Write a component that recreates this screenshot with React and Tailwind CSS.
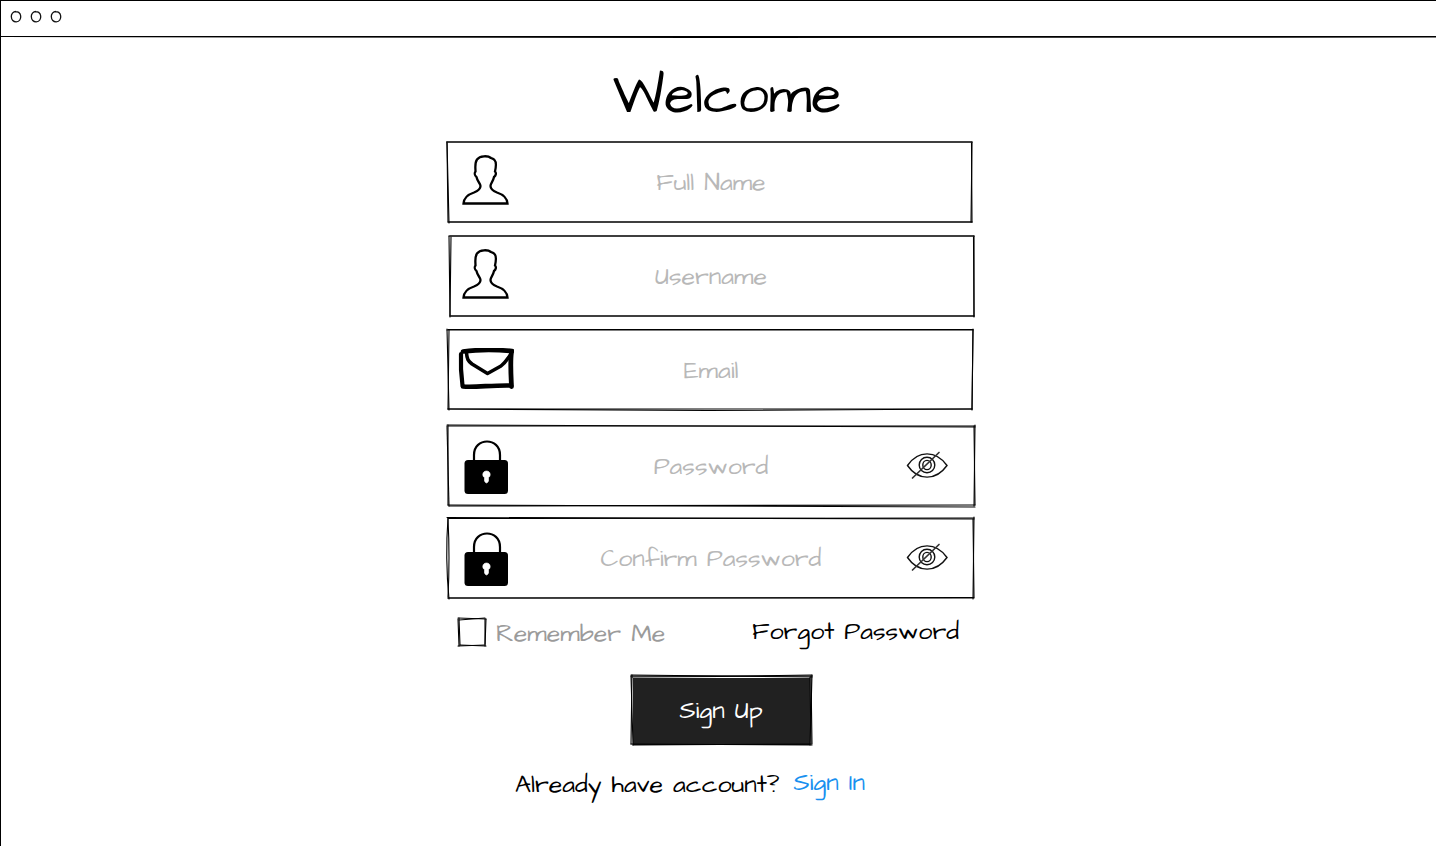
import { useState } from "react";

const outlines = {
  name: ["M-1.500 0 L524 0", "M-1 0 L524 0", "M524 0 L523 80", "M523.500 1 L524 80", "M1 80 L524 80", "M0 80 L524 80", "M-1 0 L1 81", "M-1 1 L0 80"],
  username: ["M1 0 L526 0", "M2 0 L526 0", "M526 0 L526 80", "M525.500 1 L526 81", "M2 80 L526 80", "M3 80 L526 80", "M1 0 L2 80", "M3 1 L2 81"],
  email: ["M-1 0 L525 0", "M0 -0.500 L525 -0.500", "M525 -1 L524 80", "M525 0 L524 79", "M0 79 L524 79", "M0 79 L260 80.500 L524 79", "M-1 -1 L1 80", "M1 0 L0 79"],
  password: ["M-1 -1 L527 1", "M0 0 L527 0", "M527 -1 L526 80", "M526 0 L527 79", "M0 79 L527 81", "M1 80 L527 79", "M-1 0 L1 80", "M0 -1 L0 79"],
  confirm: ["M-1 -0.500 L526 1", "M0 0.500 L526 0", "M526 -1 L525 81", "M525 1 L526 79", "M0 80 L526 79.500", "M0 80 L526 80", "M0 0 Q-3 40 1 81", "M0 1 Q2 40 0 79"],
};

function Outline({ paths, box = "0 0 526 80" }) {
  return (
    <svg
      aria-hidden="true"
      viewBox={box}
      preserveAspectRatio="none"
      className="pointer-events-none absolute inset-0 h-full w-full overflow-visible"
      fill="none"
      stroke="#000"
      strokeWidth="1.1"
      strokeLinecap="round"
    >
      {paths.map((d) => (
        <path key={d} d={d} vectorEffect="non-scaling-stroke" />
      ))}
    </svg>
  );
}

function UserIcon() {
  return (
    <svg aria-hidden="true" className="mb-1" width="48" height="50" viewBox="0 0 48 50" fill="none" stroke="#000" strokeWidth="2.3" strokeLinejoin="miter">
      <path d="M1.500 48.500 H45.500 C45 42 41 39.500 35 37.500 C30 35.500 28.500 34 28.500 31 C28.500 28.500 31 27 32 22 C34 20.500 34.500 18 33 16.500 C34 12 34.500 7 32.500 5 C31 3 30 3.500 29 3 C26 0.500 18 0.500 15 4.500 C12.500 8 13.500 13 13.500 16.500 C12.200 18 12.800 20.500 14.500 22 C15.500 27 18.500 28.500 18.500 31 C18.500 34 17 35.500 12 37.500 C6 39.500 2 42 1.500 48.500 Z" />
    </svg>
  );
}

function MailIcon() {
  return (
    <svg aria-hidden="true" className="mb-0.5" width="56" height="42" viewBox="0 0 56 42" fill="none" stroke="#000" strokeLinecap="round" strokeLinejoin="round">
      <path d="M5 3.500 C20 1.500 38 1.500 54 3" strokeWidth="4.600" />
      <path d="M3 6 C2.500 17 3.500 30 4.500 37.500" strokeWidth="4.200" />
      <path d="M5 38.500 C18 39.500 34 37 53 37.500" strokeWidth="4.600" />
      <path d="M53.500 4 C52 14 53 28 53.500 38.500" strokeWidth="4.800" />
      <path d="M8.500 5 C9 11 10 13 14 16 L29.500 25.500 L43 18 C48 14 50 10 53 6" strokeWidth="3.500" />
    </svg>
  );
}

function LockIcon() {
  return (
    <svg aria-hidden="true" className="mt-0.5" width="44" height="54" viewBox="0 0 44 54">
      <path d="M10 21 V15 C10 -3 36 -3 36 15 V21" fill="none" stroke="#000" strokeWidth="2.200" />
      <rect x="0.500" y="20" width="43.500" height="34" rx="3.500" fill="#000" />
      <path d="M22.500 31 C18 31 18 36.500 20.500 37.500 V41 Q22.500 45 24.500 41 V37.500 C27 36.500 27 31 22.500 31 Z" fill="#fff" stroke="#fff" strokeWidth="0.6" />
    </svg>
  );
}

function EyeIcon() {
  return (
    <svg aria-hidden="true" width="42" height="30" viewBox="0 0 42 30" fill="none" stroke="#111" strokeWidth="1.400" strokeLinecap="round">
      <path d="M1.500 14.500 C12 -1 30 -1 41 14.500 C30 30 12 30 1.500 14.500 Z" />
      <circle cx="21" cy="14" r="7.800" />
      <ellipse cx="21" cy="14" rx="4.200" ry="4.600" />
      <path d="M6.500 27 L33 1.500" stroke="#333" strokeWidth="1.700" />
    </svg>
  );
}

function Field({ id, label, type = "text", icon, secret = false }) {
  const [shown, setShown] = useState(false);
  return (
    <div className="relative grid h-20 grid-cols-[94px_1fr_94px] items-center">
      <Outline paths={outlines[id]} />
      <label htmlFor={id} aria-label={label} className="flex justify-center pr-[18px]">
        {icon}
      </label>
      <input
        id={id}
        name={id}
        type={secret && !shown ? "password" : type}
        placeholder={label}
        className="h-16 w-full min-w-0 bg-transparent text-center text-[25px] leading-8 outline-none placeholder:text-[#b8b8b8]"
      />
      {secret && (
        <button type="button" aria-label={`Show ${label}`} onClick={() => setShown(!shown)} className="flex justify-center">
          <EyeIcon />
        </button>
      )}
    </div>
  );
}

export default function App() {
  return (
    <div className="min-h-screen border-l border-black bg-white font-['Architects_Daughter','Inter',sans-serif] text-[25px] leading-8 text-black">
      <header className="relative flex h-[38px] items-center gap-2 border-t border-black px-[9px] pb-1.5">
        {[0, 1, 2].map((n) => (
          <svg key={n} aria-hidden="true" width="12" height="14" viewBox="0 0 12 14" fill="none" stroke="#111" strokeWidth="1.300">
            <path d="M6 1.500 C3 1.500 1.200 4 1.300 6.500 C1.400 10 3.500 12 6.200 11.900 C9.500 11.700 11 9 10.700 6 C10.400 3 8 0.700 3.500 2" />
          </svg>
        ))}
        <Outline box="0 0 1436 37" paths={["M0 35.500 L1436 35.500", "M0 35.500 L700 36.500 L1436 36"]} />
      </header>
      <main className="pr-[15px]">
        <form className="mx-auto w-full max-w-[526px]" onSubmit={(e) => e.preventDefault()}>
          <h1 className="pt-[26px] pb-3.5 pl-8 text-center text-[55px] leading-[64px] font-normal">Welcome</h1>
          <div className="flex flex-col gap-4">
            <div className="flex flex-col gap-3.5">
              <Field id="name" label="Full Name" icon={<UserIcon />} />
              <Field id="username" label="Username" icon={<UserIcon />} />
              <Field id="email" label="Email" type="email" icon={<MailIcon />} />
            </div>
            <div className="flex flex-col gap-3">
              <Field id="password" label="Password" secret icon={<LockIcon />} />
              <Field id="confirm" label="Confirm Password" secret icon={<LockIcon />} />
            </div>
          </div>
          <div className="flex items-start justify-between pt-5 pr-[15px] pl-2.5">
            <label className="flex items-start gap-2.5 text-[#9b9b9b]">
              <span className="relative block size-7">
                <input type="checkbox" name="remember" className="block size-7 appearance-none checked:bg-[#212121]" />
                <Outline box="0 0 28 28" paths={["M0 0 L28 1", "M1 2 L27 0", "M28 1 L27 28", "M27 1 L27 26", "M0 28 L27 27", "M2 27 L28 28", "M0 1 L1 28", "M1 0 L2 27"]} />
              </span>
              Remember Me
            </label>
            <a href="#forgot" className="leading-7">
              Forgot Password
            </a>
          </div>
          <div className="flex justify-center pt-[25px] pl-5">
            <button type="submit" className="relative h-[70px] w-[181px] pt-0.5 text-white">
              <span className="absolute inset-x-0.5 top-[3px] bottom-0 bg-[#212121]" />
              <Outline
                box="0 0 181 70"
                paths={["M0 0 L181 2", "M1 2 L90 1.500 L181 0", "M0 1 L181 1", "M181 0 L179 70", "M180 1 L181 69", "M179 2 L180 69", "M0 69 L181 70", "M2 70 L180 69", "M1 0 L0 69", "M0 1 L2 70"]}
              />
              <span className="relative">Sign Up</span>
            </button>
          </div>
          <p className="flex justify-center gap-3.5 pt-6 pr-[42px]">
            Already have account?
            <a href="#signin" className="leading-7 text-[#1890ef]">
              Sign In
            </a>
          </p>
        </form>
      </main>
    </div>
  );
}
